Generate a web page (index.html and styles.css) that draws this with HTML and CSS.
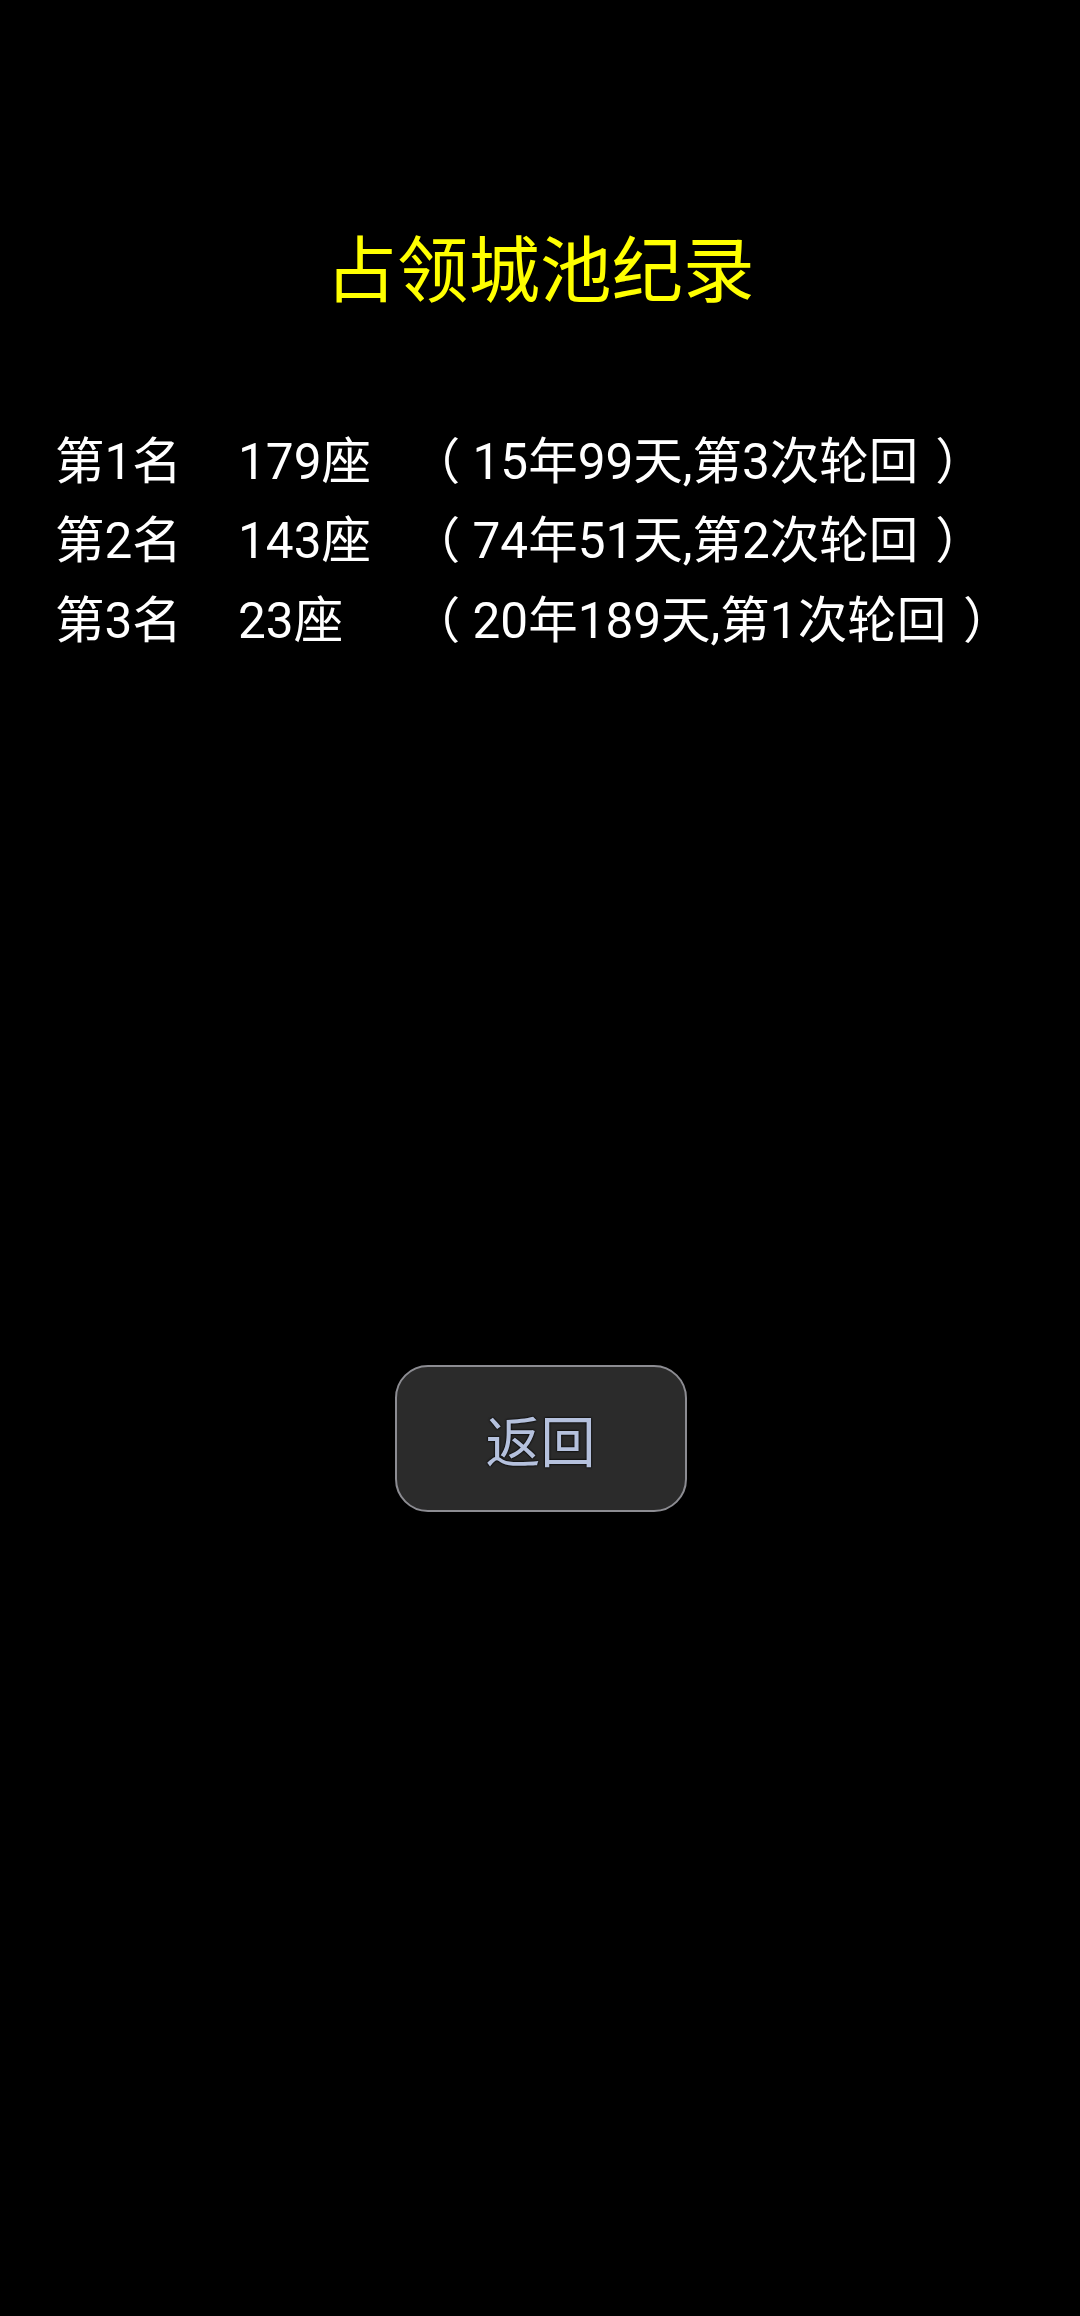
FILE: index.html
```html
<!DOCTYPE html>
<html lang="zh-CN">
<head>
<meta charset="utf-8">
<title>占领城池纪录</title>
<link rel="stylesheet" href="styles.css">
</head>
<body>
<main class="screen">
  <h1 class="title">占领城池纪录</h1>
  <div class="records">
    <div class="row"><span class="rank">第1名</span><span class="count">179座</span><span class="detail"><span class="po">（</span>15年99天,第3次轮回<span class="pc">）</span></span></div>
    <div class="row"><span class="rank">第2名</span><span class="count">143座</span><span class="detail"><span class="po">（</span>74年51天,第2次轮回<span class="pc">）</span></span></div>
    <div class="row"><span class="rank">第3名</span><span class="count">23座</span><span class="detail"><span class="po">（</span>20年189天,第1次轮回<span class="pc">）</span></span></div>
  </div>
  <div class="actions">
    <button class="back">返回</button>
  </div>
</main>
</body>
</html>
```

FILE: styles.css
```css
html, body {
  margin: 0;
  padding: 0;
  background: #000;
}
.screen {
  width: 1080px;
  height: 2316px;
  background: #000;
  display: flex;
  flex-direction: column;
  font-family: Roboto, "Noto Sans CJK SC", sans-serif;
}
.title {
  margin: 230px 0 0 0;
  font-family: "Noto Sans CJK SC", sans-serif;
  font-weight: 400;
  font-size: 71.5px;
  line-height: 71.5px;
  color: #ffff00;
  text-align: center;
}
.records {
  margin-top: 121px;
  padding-left: 55px;
  display: flex;
  flex-direction: column;
}
.row {
  display: grid;
  grid-template-columns: 183px 185px auto;
  font-size: 49.5px;
  line-height: 79.5px;
  color: #ffffff;
  white-space: nowrap;
}
.po {
  margin-left: -0.25em;
  margin-right: 0.25em;
}
.pc {
  margin-left: 0.34em;
}
.actions {
  margin-top: 704px;
  display: flex;
  justify-content: center;
}
.back {
  width: 292px;
  height: 147px;
  margin-left: 1px;
  box-sizing: border-box;
  border: 2px solid #8c8c92;
  border-radius: 33px;
  background: #2b2b2b;
  color: #b5c1dd;
  font-family: "Noto Sans CJK SC", sans-serif;
  font-size: 55px;
  line-height: 1;
  padding: 0;
  display: flex;
  align-items: center;
  justify-content: center;
  text-shadow: 0 0 2px #000, 0 0 2px #000;
}
```
